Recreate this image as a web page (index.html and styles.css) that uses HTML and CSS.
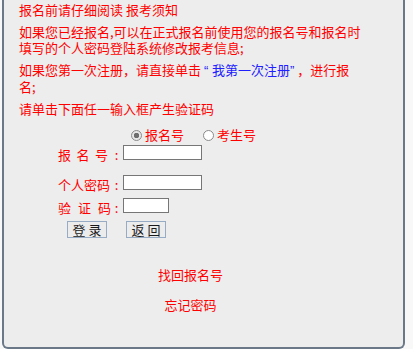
FILE: index.html
```html
<!DOCTYPE html>
<html lang="zh-CN">
<head>
<meta charset="utf-8">
<title>报名登录</title>
<link rel="stylesheet" href="styles.css">
</head>
<body>
<div class="box">
  <p class="note">报名前请仔细阅读 报考须知</p>
  <p class="note">如果您已经报名,可以在正式报名前使用您的报名号和报名时填写的个人密码登陆系统修改报考信息;</p>
  <p class="note">如果您第一次注册，请直接单击 <a class="reg" href="#"><span class="q">“ </span>我第一次注册<span class="q">”</span></a> ，进行报名;</p>
  <p class="note">请单击下面任一输入框产生验证码</p>

  <form class="form">
    <div class="radios">
      <label class="opt"><input class="radio" type="radio" name="t" checked><span>报名号</span></label>
      <label class="opt opt2"><input class="radio" type="radio" name="t"><span>考生号</span></label>
    </div>
    <div class="row row1">
      <span class="lbl"><span class="spread">报名号</span><span class="colon">:</span></span>
      <input class="field" type="text">
    </div>
    <div class="row row2">
      <span class="lbl"><span>个人密码</span><span class="colon">:</span></span>
      <input class="field" type="password">
    </div>
    <div class="row row3">
      <span class="lbl"><span class="spread spread2">验证码</span><span class="colon">:</span></span>
      <input class="field short" type="text">
    </div>
    <div class="btns">
      <button class="btn" type="button">登 录</button>
      <button class="btn" type="button">返 回</button>
    </div>
  </form>

  <div class="links">
    <a class="lnk" href="#">找回报名号</a>
    <a class="lnk lnk2" href="#">忘记密码</a>
  </div>
</div>
</body>
</html>
```

FILE: styles.css
```css
html, body {
  margin: 0;
  padding: 0;
  background: #f8f8f8;
}
body {
  font-family: "Noto Sans CJK SC", "Noto Sans", sans-serif;
  font-size: 13px;
  line-height: 16px;
  color: #ff0000;
}
.box {
  box-sizing: border-box;
  margin-left: 2px;
  width: 403px;
  height: 349px;
  background: #ededed;
  border: 2px solid #6a7888;
  border-top: none;
  border-radius: 0 0 6px 6px;
  padding: 2px 41px 0 15px;
}
.note {
  margin: 0 0 6px 0;
}
.reg {
  color: #2020ff;
  text-decoration: none;
}
.q {
  font-family: "Liberation Sans", sans-serif;
}
.form {
  margin: 10px 0 0 0;
  padding-left: 39px;
  white-space: nowrap;
}
.radios {
  display: flex;
  align-items: center;
  height: 16px;
  margin-left: 73px;
}
.opt {
  display: flex;
  align-items: center;
}
.opt2 {
  margin-left: 19px;
}
.radio {
  appearance: none;
  -webkit-appearance: none;
  box-sizing: border-box;
  width: 11px;
  height: 11px;
  margin: 0 3px 0 0;
  border: 1px solid #8a8a8a;
  border-radius: 50%;
  background: #fff;
}
.radio:checked {
  background: radial-gradient(circle, #6d6d6d 0 2.5px, #e6e6e6 3px);
}
.row {
  display: flex;
  align-items: flex-start;
}
.row1 { margin-top: 2px; }
.row2 { margin-top: 12px; }
.row3 { margin-top: 5px; }
.lbl {
  display: flex;
  flex: 0 0 62px;
  margin: 2px 3px 0 0;
  white-space: nowrap;
}
.spread {
  letter-spacing: 5.5px;
  margin-right: -5.5px;
}
.spread2 {
  letter-spacing: 7px;
  margin-right: -7px;
}
.colon {
  width: 7px;
  margin-left: auto;
  text-align: center;
}
.field {
  box-sizing: border-box;
  width: 79px;
  height: 15px;
  margin: 0;
  padding: 0 2px;
  border: 1px solid #767676;
  background: #fff;
  font-size: 12px;
}
.short {
  width: 46px;
}
.btns {
  display: flex;
  gap: 19px;
  margin: 5px 0 0 9px;
}
.btn {
  box-sizing: border-box;
  width: 40px;
  height: 17px;
  margin: 0;
  padding: 0;
  border: 1px solid #98abc4;
  background: #ececec;
  color: #1a1a1a;
  font-family: "Noto Sans CJK SC", sans-serif;
  font-size: 13px;
  line-height: 15px;
}
.links {
  display: flex;
  flex-direction: column;
  align-items: center;
  margin-top: 29px;
}
.lnk {
  color: #ff0000;
  text-decoration: none;
}
.lnk2 {
  margin-top: 14px;
}
```
